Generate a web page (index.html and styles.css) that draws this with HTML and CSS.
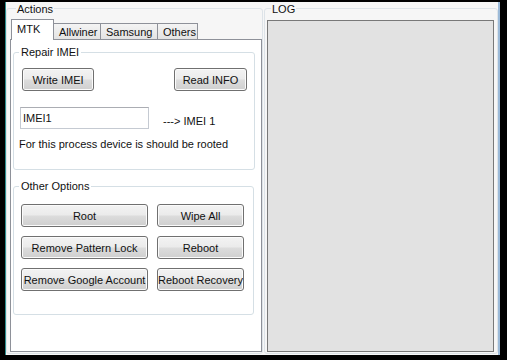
FILE: index.html
```html
<!DOCTYPE html>
<html lang="en">
<head>
    <meta charset="UTF-8">
    <title>IMEI Tool</title>
    <link rel="stylesheet" href="styles.css">
</head>
<body>
    <div class="window">
        <div class="group actions">
            <span class="group-title">Actions</span>
            <div class="tabs">
                <div class="tab active">MTK</div>
                <div class="tab w-allwiner">Allwiner</div>
                <div class="tab w-samsung">Samsung</div>
                <div class="tab w-others">Others</div>
            </div>
            <div class="tab-page">
                <div class="box repair">
                    <span class="box-title">Repair IMEI</span>
                    <div class="btn-row">
                        <button class="btn w-write">Write IMEI</button>
                        <button class="btn w-read">Read INFO</button>
                    </div>
                    <div class="imei-row">
                        <input class="textbox" type="text" value="IMEI1">
                        <span class="arrow">---&gt; IMEI 1</span>
                    </div>
                    <p class="note">For this process device is should be rooted</p>
                </div>
                <div class="box options">
                    <span class="box-title">Other Options</span>
                    <div class="opt-grid">
                        <button class="btn">Root</button>
                        <button class="btn">Wipe All</button>
                        <button class="btn">Remove Pattern Lock</button>
                        <button class="btn">Reboot</button>
                        <button class="btn">Remove Google Account</button>
                        <button class="btn">Reboot Recovery</button>
                    </div>
                </div>
            </div>
        </div>
        <div class="group log">
            <span class="group-title">LOG</span>
            <div class="log-box"></div>
        </div>
    </div>
</body>
</html>
```

FILE: styles.css
```css
* { box-sizing: border-box; }
body { margin: 0; width: 507px; height: 360px; overflow: hidden; background: #000; font-family: 'Liberation Sans', Arial, sans-serif; font-size: 11px; color: #111; }

.window { display: flex; width: 495px; height: 353px; margin: 2px 0 0 5px; padding-top: 6px; background: #f6f6f6; border-left: 1px solid #2f8f8f; border-right: 2px solid #9cbad8; }

.group { position: relative; height: 346px; border: 1px solid #dde3e8; border-radius: 3px; }
.group-title { position: absolute; top: -6px; left: 9px; padding: 0 1px; line-height: 13px; background: #f6f6f6; }
.actions { width: 257px; padding: 10px 0 0 3px; }
.log { width: 234px; margin-left: 1px; padding: 11px 0 0 2px; }
.log .group-title { left: 6px; }
.log-box { width: 227px; height: 332px; background: #e2e2e2; border: 1px solid #787878; }

/* tabs */
.tabs { display: flex; align-items: flex-start; height: 20px; margin-left: 1px; }
.tab { height: 16px; margin-top: 4px; padding: 1px 0 0 5px; line-height: 15px; border: 1px solid #8e9199; border-bottom: none; border-left: none; background: linear-gradient(#f4f4f4, #e3e3e3); }
.tab.active { position: relative; z-index: 1; width: 43px; height: 21px; margin-top: 0; padding-top: 2px; line-height: 15px; background: #fff; border-left: 1px solid #8e9199; }
.w-allwiner { width: 47px; }
.w-samsung { width: 57px; }
.w-others { width: 40px; }
.tab-page { width: 252px; height: 313px; padding: 0 0 0 2px; background: #fff; border: 1px solid #8e9199; }

/* group boxes inside the tab */
.box { position: relative; width: 242px; border: 1px solid #d5dfe5; border-radius: 3px; }
.box-title { position: absolute; top: -7px; left: 5px; padding: 0 2px; line-height: 13px; background: #fff; }
.repair { height: 118px; margin-top: 12px; }
.options { height: 129px; margin-top: 16px; width: 241px; }

.btn { display: flex; align-items: center; justify-content: center; height: 23px; padding: 0; overflow: hidden; white-space: nowrap; font: inherit; color: #111; border: 1px solid #707070; border-radius: 3px; background: linear-gradient(#f3f3f3 0%, #ebebeb 48%, #dcdcdc 52%, #cfcfcf 100%); box-shadow: inset 0 0 0 1px #fbfbfb; }
.btn-row { display: flex; justify-content: space-between; margin-top: 15px; padding: 0 7px 0 8px; }
.w-write { width: 72px; }
.w-read { width: 73px; }

.imei-row { display: flex; align-items: flex-start; margin: 16px 0 0 6px; }
.textbox { width: 129px; height: 22px; padding: 0 0 0 2px; font: inherit; color: #111; border: 1px solid #c5cad2; border-top-color: #abadb3; outline: none; }
.arrow { margin: 8px 0 0 14px; line-height: 13px; }
.note { margin: 9px 0 0 5px; line-height: 13px; }

.opt-grid { display: grid; grid-template-columns: 127px 87px; grid-auto-rows: 23px; gap: 9px; margin: 17px 0 0 7px; }
```
